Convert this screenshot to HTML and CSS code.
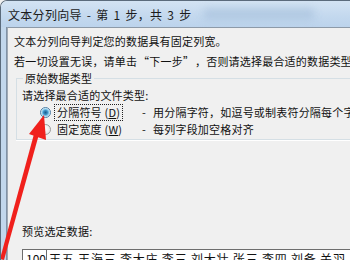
FILE: index.html
```html
<!DOCTYPE html>
<html lang="zh-CN">
<head>
    <meta charset="UTF-8">
    <title>文本分列向导</title>
    <link rel="stylesheet" href="styles.css">
</head>
<body>
    <div class="window">
        <div class="titlebar">
            <span class="title">文本分列向导 - 第 1 步，共 3 步</span>
            <span class="blur"></span>
        </div>
        <div class="client">
            <div class="frame-left"></div>
            <div class="content">
                <div class="line">文本分列向导判定您的数据具有固定列宽。</div>
                <div class="line">若一切设置无误，请单击<span class="q open">“</span>下一步<span class="q">”</span>，否则请选择最合适的数据类型。</div>

                <fieldset class="group">
                    <legend>原始数据类型</legend>
                    <div class="row">请选择最合适的文件类型:</div>
                    <div class="row option">
                        <span class="radio checked"></span>
                        <span class="opt-label focus">分隔符号 (<u>D</u>)</span>
                        <span class="dash">-</span>
                        <span>用分隔字符，如逗号或制表符分隔每个字段</span>
                    </div>
                    <div class="row option">
                        <span class="radio"></span>
                        <span class="opt-label">固定宽度 (<u>W</u>)</span>
                        <span class="dash">-</span>
                        <span>每列字段加空格对齐</span>
                    </div>
                </fieldset>

                <div class="preview-label">预览选定数据:</div>
                <div class="preview">
                    <span class="rownum">100</span>
                    <span class="rowdata">王五 王海三 李大庄 李三 刘大壮 张三 李四 刘备 关羽</span>
                </div>
            </div>
        </div>

        <svg class="arrow" width="60" height="260" viewBox="0 0 60 260">
            <polygon points="-1,258 3,259 37.5,135 33,133" fill="#f0201c"/>
            <polygon points="43,114 45,139 28,133" fill="#f0201c"/>
        </svg>
    </div>
</body>
</html>
```

FILE: styles.css
```css
body {
    margin: 0;
    width: 350px;
    height: 260px;
    overflow: hidden;
    font-family: "Noto Sans CJK SC", "Microsoft YaHei", sans-serif;
    font-size: 11px;
    color: #111;
    background: #f0f0f0;
}
.window {
    position: relative;
    height: 260px;
    display: flex;
    flex-direction: column;
    border-top-left-radius: 7px;
    border-top: 1px solid #5b6b7c;
    border-left: 1px solid #5b6b7c;
    overflow: hidden;
}
.titlebar {
    height: 26px;
    display: flex;
    align-items: center;
    padding-left: 7px;
    background: linear-gradient(to bottom, #d3e3f3, #c3d8ee 60%, #bcd3ec);
    flex-shrink: 0;
}
.title {
    font-size: 12px;
    letter-spacing: 0.3px;
    word-spacing: 2px;
    color: #1b1b1b;
    white-space: nowrap;
}
.blur {
    width: 110px;
    height: 10px;
    margin-left: 12px;
    background: #a5bfdb;
    filter: blur(4px);
    opacity: 0.7;
}
.client {
    flex: 1;
    display: flex;
    background: #c2d7ec;
}
.frame-left {
    width: 5px;
    border-right: 1px solid #8192a6;
    flex-shrink: 0;
}
.content {
    flex: 1;
    background: #f0f0f0;
    border-top: 1px solid #8d9aa8;
    border-left: 1px solid #a0aab5;
    padding: 3px 0 0 6px;
    overflow: hidden;
}
.line {
    height: 20px;
    line-height: 20px;
    white-space: nowrap;
    letter-spacing: 0.2px;
}
.q {
    display: inline-block;
    width: 1.1em;
    text-align: left;
}
.q.open {
    text-align: right;
}
.group {
    margin: 0 -20px 0 2px;
    padding: 0 0 1px 5px;
    border: 1px solid #d5dfe5;
    box-shadow: 0 1px 0 #fff;
    min-width: 0;
}
.group legend {
    margin-left: 1px;
    padding: 0 2px;
    height: 14px;
    line-height: 14px;
    letter-spacing: 0.2px;
}
.row {
    height: 17px;
    line-height: 17px;
    white-space: nowrap;
    letter-spacing: 0.2px;
}
.row:first-of-type {
    margin-top: 2px;
}
.option {
    display: flex;
    align-items: center;
    padding-left: 18px;
}
.radio {
    width: 11px;
    height: 11px;
    border-radius: 50%;
    border: 1px solid #9a9a9a;
    background: radial-gradient(circle at 50% 40%, #fdfdfd, #dcdcdc);
    box-sizing: border-box;
    flex-shrink: 0;
}
.radio.checked {
    border-color: #4d7ea6;
    background: radial-gradient(circle, #1d5d8c 0, #3b8fc4 2px, #8fd0ef 3.5px, #e6f2f8 4.5px);
}
.opt-label {
    margin-left: 3px;
    padding: 0 2px;
    height: 15px;
    line-height: 15px;
    border: 1px solid transparent;
    width: 63px;
    flex-shrink: 0;
}
.opt-label.focus {
    border: 1px dotted #222;
}
.dash {
    margin: 0 7px 0 19px;
}
.preview-label {
    margin: 83px 0 0 8px;
    height: 17px;
    line-height: 17px;
    letter-spacing: 0.2px;
}
.preview {
    margin: 9px -20px 0 8px;
    height: 30px;
    display: flex;
    background: #fff;
    border-top: 1px solid #6d6d6d;
    border-left: 1px solid #6d6d6d;
    white-space: nowrap;
    font-size: 12px;
}
.rownum {
    width: 20px;
    padding-left: 3px;
    border-right: 1px solid #6d6d6d;
    flex-shrink: 0;
}
.rowdata {
    padding-left: 2px;
    letter-spacing: 0.8px;
}
.arrow {
    position: absolute;
    left: 0;
    top: 0;
}
```
